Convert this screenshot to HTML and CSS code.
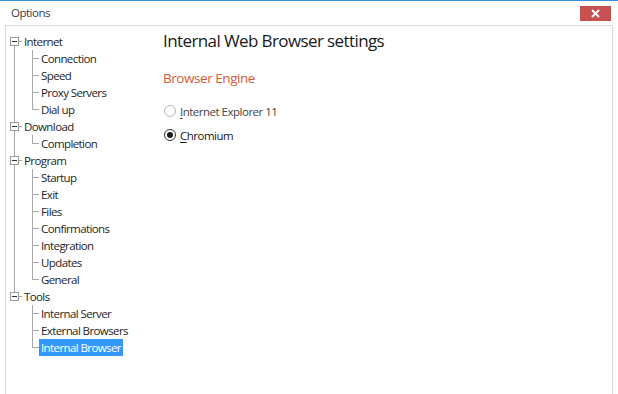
FILE: index.html
```html
<!DOCTYPE html>
<html>
<head>
<meta charset="utf-8">
<link rel="stylesheet" href="styles.css">
</head>
<body>
<div class="window">
  <div class="titlebar">
    <span class="title">Options</span>
    <button class="close" aria-label="Close">
      <svg width="9" height="9" viewBox="0 0 9 9"><path d="M1 1 L8 8 M8 1 L1 8" stroke="#fff" stroke-width="2"/></svg>
    </button>
  </div>
  <div class="panel">
    <div class="tree">
      <div class="group first">
        <div class="node"><span class="box"></span><span class="label">Internet</span></div>
        <div class="children">
          <div class="leaf"><span class="label">Connection</span></div>
          <div class="leaf"><span class="label">Speed</span></div>
          <div class="leaf"><span class="label">Proxy Servers</span></div>
          <div class="leaf"><span class="label">Dial up</span></div>
        </div>
      </div>
      <div class="group">
        <div class="node"><span class="box"></span><span class="label">Download</span></div>
        <div class="children">
          <div class="leaf"><span class="label">Completion</span></div>
        </div>
      </div>
      <div class="group">
        <div class="node"><span class="box"></span><span class="label">Program</span></div>
        <div class="children">
          <div class="leaf"><span class="label">Startup</span></div>
          <div class="leaf"><span class="label">Exit</span></div>
          <div class="leaf"><span class="label">Files</span></div>
          <div class="leaf"><span class="label">Confirmations</span></div>
          <div class="leaf"><span class="label">Integration</span></div>
          <div class="leaf"><span class="label">Updates</span></div>
          <div class="leaf"><span class="label">General</span></div>
        </div>
      </div>
      <div class="group last">
        <div class="node"><span class="box"></span><span class="label">Tools</span></div>
        <div class="children">
          <div class="leaf"><span class="label">Internal Server</span></div>
          <div class="leaf"><span class="label">External Browsers</span></div>
          <div class="leaf"><span class="label selected">Internal Browser</span></div>
        </div>
      </div>
    </div>
    <div class="content">
      <h1 class="heading">Internal Web Browser settings</h1>
      <h2 class="section">Browser Engine</h2>
      <label class="radio"><span class="dot"></span><span class="rtext dim"><u>I</u>nternet Explorer 11</span></label>
      <label class="radio checked"><span class="dot"></span><span class="rtext"><u>C</u>hromium</span></label>
    </div>
  </div>
</div>
</body>
</html>
```

FILE: styles.css
```css
* { box-sizing: border-box; }
html, body { margin: 0; padding: 0; }
body {
  width: 618px;
  height: 394px;
  overflow: hidden;
  background: #ffffff;
  font-family: "Open Sans", "Noto Sans", sans-serif;
  font-size: 11.5px;
  color: #1e1e1e;
}
.window {
  height: 394px;
  border-top: 1px solid #3d8ee0;
  display: flex;
  flex-direction: column;
  background: #fff;
}
.titlebar {
  height: 24px;
  display: flex;
  align-items: center;
  justify-content: space-between;
  padding: 0 7px 0 11px;
}
.title {
  font-size: 11.5px;
  color: #3c3c3c;
  letter-spacing: -0.5px;
  margin-top: -1px;
}
.close {
  width: 31px;
  height: 15px;
  border: none;
  padding: 0;
  background: #c75050;
  display: flex;
  align-items: center;
  justify-content: center;
}
.panel {
  flex: 1;
  margin: 0 5px;
  border: 1px solid #dadada;
  border-bottom: none;
  display: flex;
}
.tree {
  width: 152px;
  padding-top: 7px;
  letter-spacing: -0.6px;
}
.group { position: relative; }
.node {
  position: relative;
  height: 17px;
  line-height: 17px;
  display: flex;
  align-items: center;
}
.box {
  position: relative;
  z-index: 1;
  width: 9px;
  height: 9px;
  margin-left: 4px;
  border: 1px solid #9a9a9a;
  background: #fff;
}
.box::after {
  content: "";
  position: absolute;
  left: 1px;
  top: 3px;
  width: 5px;
  height: 1px;
  background: #333;
}
.node .label { position: relative; padding-left: 5px; }
.node .label::before {
  content: "";
  position: absolute;
  left: 0;
  top: 8px;
  width: 3px;
  height: 1px;
  background: #a8a8a8;
}
/* trunk line linking top-level nodes */
.group::before {
  content: "";
  position: absolute;
  left: 8px;
  width: 1px;
  background: #a8a8a8;
  top: 0;
  bottom: 0;
}
.group.first::before { top: 8px; }
.group.last::before { bottom: auto; height: 8px; }
.leaf {
  position: relative;
  height: 17px;
  line-height: 17px;
  padding-left: 33px;
}
.leaf::before {
  content: "";
  position: absolute;
  left: 26px;
  top: 0;
  bottom: 0;
  width: 1px;
  background: #a8a8a8;
}
.leaf:last-child::before { bottom: 8px; }
.leaf::after {
  content: "";
  position: absolute;
  left: 27px;
  top: 8px;
  width: 6px;
  height: 1px;
  background: #a8a8a8;
}
.leaf .label {
  display: inline-block;
  padding: 0 2px;
  height: 17px;
}
.leaf .label.selected {
  background: #3399ff;
  color: #fff;
}
.content {
  flex: 1;
  padding-left: 5px;
}
.heading {
  margin: 3px 0 0 0;
  font-size: 17px;
  font-weight: normal;
  line-height: 24px;
  color: #1a1a1a;
  letter-spacing: -0.6px;
}
.section {
  margin: 15px 0 0 0;
  font-size: 13.5px;
  font-weight: normal;
  line-height: 20px;
  color: #d65a3a;
  letter-spacing: -0.45px;
}
.radio {
  display: flex;
  align-items: center;
  height: 24px;
  letter-spacing: -0.5px;
}
.radio:first-of-type { margin-top: 11px; }
.dot {
  width: 12px;
  height: 12px;
  margin-left: 1px;
  margin-right: 4px;
  border: 1px solid #b5b5b5;
  border-radius: 50%;
  background: #fff;
  display: flex;
  align-items: center;
  justify-content: center;
}
.checked .dot { border-color: #333; }
.checked .dot::after {
  content: "";
  width: 6px;
  height: 6px;
  border-radius: 50%;
  background: #1a1a1a;
}
.rtext { color: #222; }
.rtext.dim { color: #444; }
.rtext u { text-decoration-thickness: 1px; text-underline-offset: 2px; }
```
